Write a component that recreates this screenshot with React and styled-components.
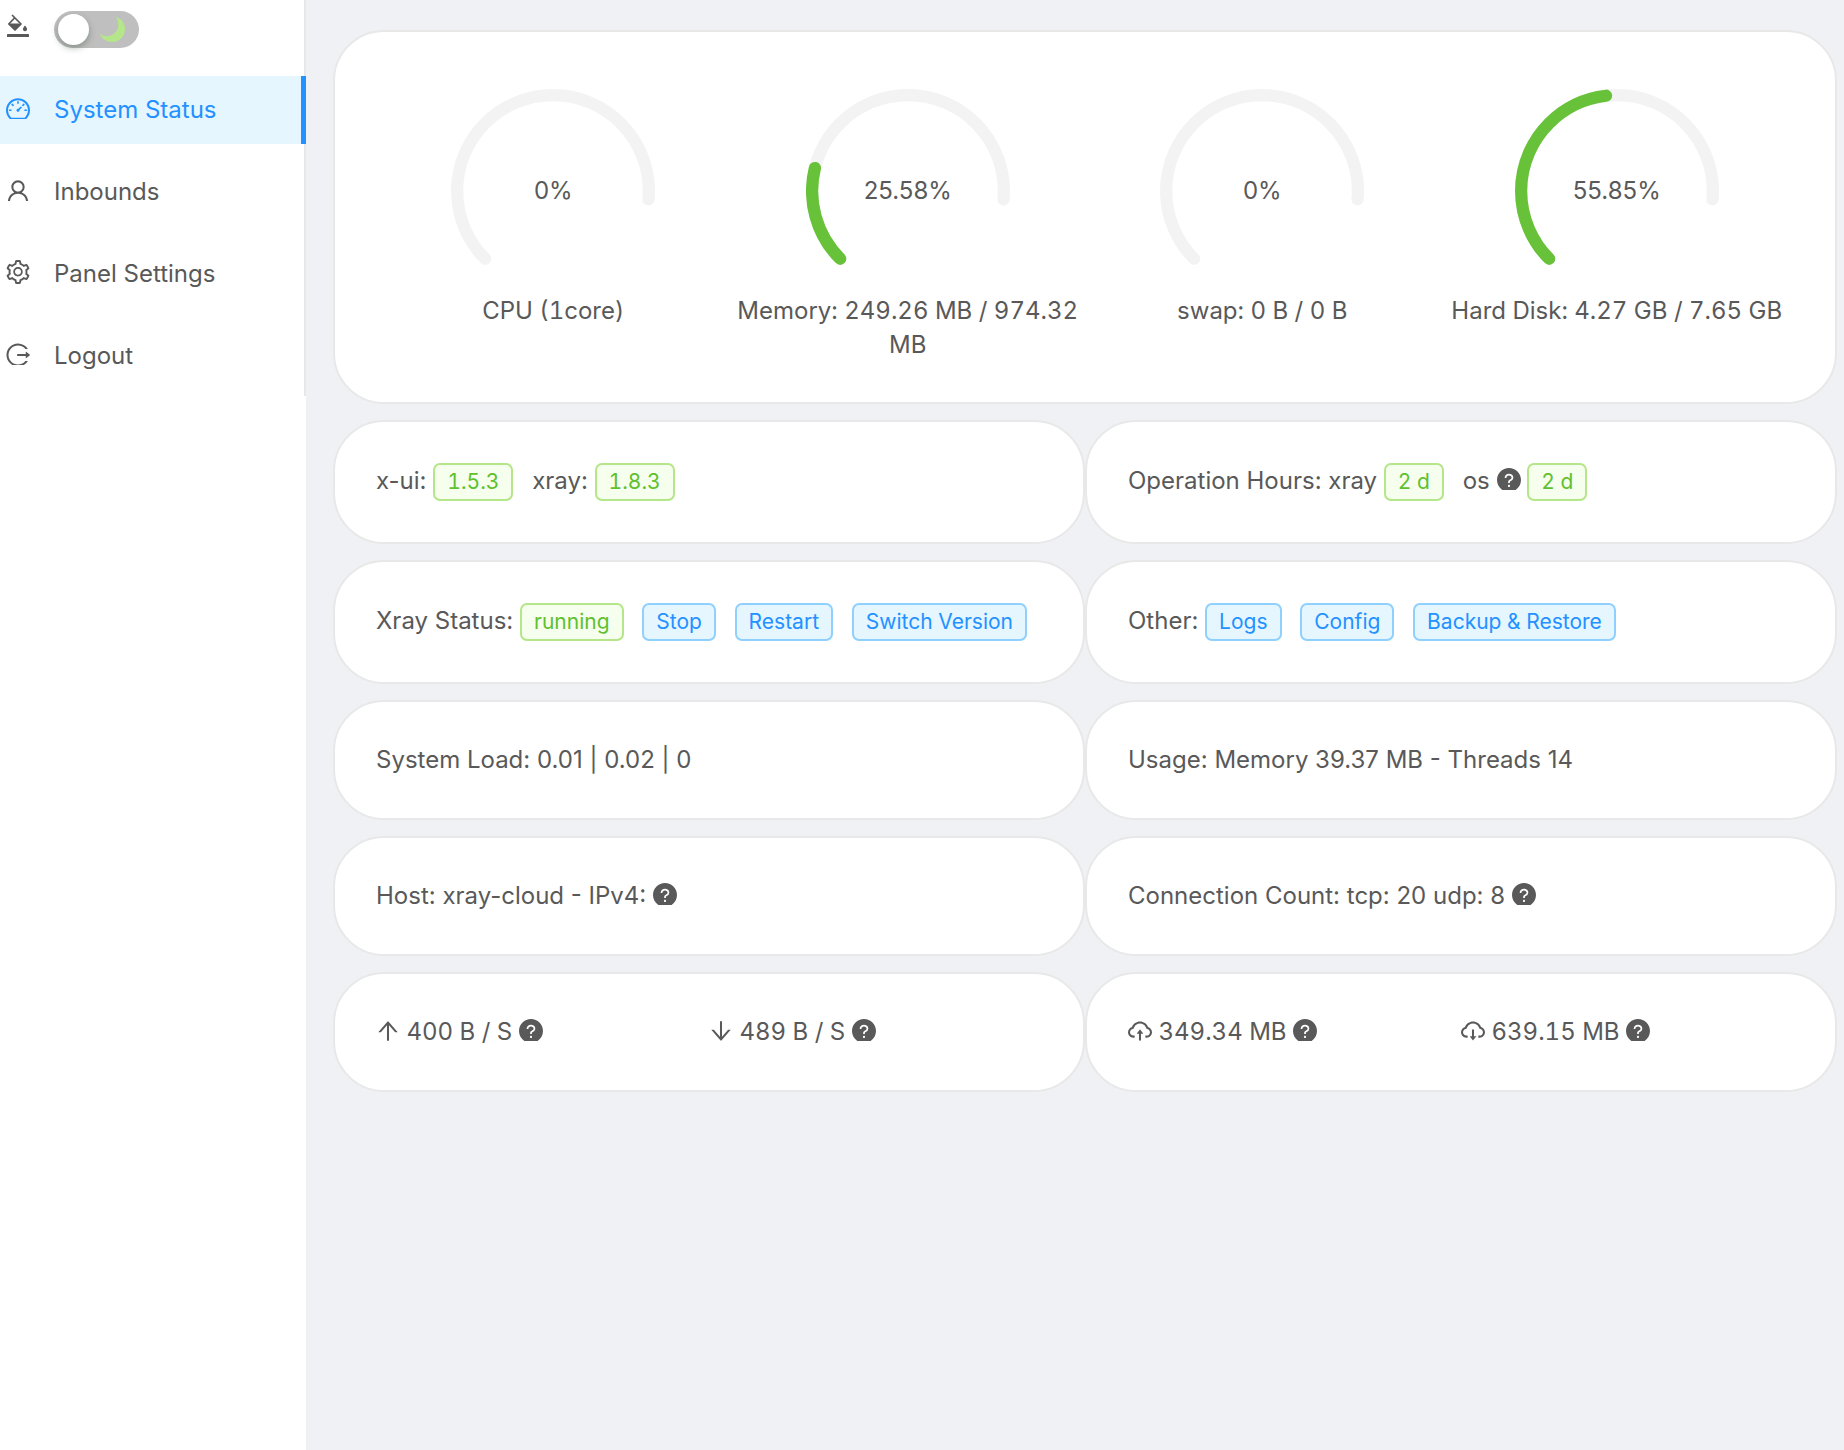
import React, { useState } from "react";
import styled, { createGlobalStyle, css } from "styled-components";
import {
  AiFillQuestionCircle,
  AiOutlineArrowDown,
  AiOutlineArrowUp,
  AiOutlineCloudDownload,
  AiOutlineCloudUpload,
  AiOutlineDashboard,
  AiOutlineLogout,
  AiOutlineSetting,
  AiOutlineUser
} from "react-icons/ai";

const GlobalStyle = createGlobalStyle`
  * {
    box-sizing: border-box;
  }

  body {
    margin: 0;
    background: #f0f1f5;
    color: #595959;
    font-family: Inter, "Liberation Sans", sans-serif;
    font-size: 24px;
    line-height: 34px;
  }
`;

const Layout = styled.div`
  display: flex;
  min-height: 100vh;
`;

const Sidebar = styled.aside`
  flex: 0 0 306px;
  background-color: #fff;
`;

const Menu = styled.ul`
  margin: 0;
  padding: 0 0 6px;
  list-style: none;
  border-right: 2px solid #e8e8e8;
`;

const ThemeRow = styled.li`
  display: flex;
  align-items: flex-start;
  gap: 24px;
  height: 62px;
  margin-bottom: 14px;
  padding: 11px 0 0 6px;
`;

const BucketIcon = styled.svg`
  width: 24px;
  height: 28px;
  fill: currentColor;
`;

const MenuItem = styled.li`
  margin-right: -2px;

  & + & {
    margin-top: 14px;
  }
`;

const MenuLink = styled.a`
  display: block;
  padding-left: 6px;
  line-height: 68px;
  color: inherit;
  text-decoration: none;

  ${props =>
    props.$active &&
    css`
      color: #2391ff;
      background-color: #e5f6ff;
      border-right: 5px solid #2391ff;
    `}
`;

const InlineIcon = styled.span`
  svg {
    width: 24px;
    height: ${props => (props.$tall ? "24px" : "22px")};
    vertical-align: ${props => (props.$tall ? "-2px" : "-1px")};
  }
`;

const MenuIcon = styled(InlineIcon)`
  display: inline-block;
  margin-right: 24px;
`;

const SwitchLabel = styled.label`
  display: grid;
  cursor: pointer;
`;

const SwitchInput = styled.input`
  grid-area: 1 / 1;
  appearance: none;
  width: 85px;
  height: 37px;
  margin: 0;
  padding: 3px 4px;
  border-radius: 20px;
  background-color: #bfbfbf;
  cursor: pointer;

  &:before {
    content: "";
    display: block;
    width: 31px;
    height: 31px;
    border-radius: 50%;
    background-color: #fff;
    box-shadow: 0 3px 7px rgba(0, 35, 11, 0.3);
  }

  &:checked {
    background-color: #2391ff;
  }

  &:checked:before {
    margin-left: auto;
  }
`;

const Moon = styled.svg`
  grid-area: 1 / 1;
  width: 28px;
  height: 28px;
  margin: 4px 0 0 45px;
  pointer-events: none;
`;

const Content = styled.main`
  flex: 1;
  min-width: 0;
  display: grid;
  grid-template-columns: 1fr 1fr;
  align-content: start;
  row-gap: 16px;
  padding: 30px 7px 28px 27px;
`;

const Card = styled.section`
  padding: 41px;
  background-color: #fff;
  border: 2px solid #e8e8e8;
  border-radius: 51px;
`;

const GaugeCard = styled(Card)`
  grid-column: 1 / -1;
  display: grid;
  grid-template-columns: repeat(4, 1fr);
  padding-top: 57px;
  padding-bottom: 40px;
`;

const GaugeItem = styled.div`
  text-align: center;
`;

const GaugeDial = styled.div`
  display: grid;
  place-items: center;
`;

const GaugeSvg = styled.svg`
  grid-area: 1 / 1;
  width: 204px;
  height: 204px;
  fill: none;
  stroke-width: 6;
  stroke-linecap: round;
`;

const GaugeValue = styled.span`
  grid-area: 1 / 1;
`;

const GaugeLabel = styled.div`
  margin-top: 1px;
  font-variant-numeric: tabular-nums;
`;

const Halves = styled(Card)`
  display: grid;
  grid-template-columns: 1fr 1fr;
  font-variant-numeric: tabular-nums;
`;

const Half = styled.div``;

const Tag = styled.span`
  display: inline-block;
  margin: 0 12px 0 0;
  padding: 0 12px;
  border: 2px solid #b5e68a;
  border-radius: 7px;
  background-color: #f6ffed;
  color: #5fc12f;
  font-family: inherit;
  font-size: 21px;
  font-variant-numeric: tabular-nums;
  line-height: 34px;

  &:last-child {
    margin-right: 0;
  }
`;

const ActionTag = styled(Tag).attrs({ as: "button", type: "button" })`
  border-color: #8fd0ff;
  background-color: #e5f6ff;
  color: #2391ff;
  cursor: pointer;
`;

const links = [
  { title: "System Status", href: "#status", icon: AiOutlineDashboard },
  { title: "Inbounds", href: "#inbounds", icon: AiOutlineUser },
  { title: "Panel Settings", href: "#settings", icon: AiOutlineSetting, tall: true },
  { title: "Logout", href: "#logout", icon: AiOutlineLogout }
];

const gauges = [
  { percent: 0, label: "CPU (1core)" },
  { percent: 25.58, label: "Memory: 249.26 MB / 974.32 MB" },
  { percent: 0, label: "swap: 0 B / 0 B" },
  { percent: 55.85, label: "Hard Disk: 4.27 GB / 7.65 GB" }
];

// degrees covered by a full gauge, starting at the lower left
const SWEEP = 230;

const Icon = ({ of: Glyph }) => (
  <Glyph viewBox="64 64 896 896" preserveAspectRatio="xMidYMin slice" aria-hidden="true" />
);

const Inline = ({ of }) => (
  <InlineIcon>
    <Icon of={of} />
  </InlineIcon>
);

const Help = () => <Inline of={AiFillQuestionCircle} />;

const Bucket = () => (
  <BucketIcon viewBox="0 0 24 28" aria-hidden="true">
    <path
      d="M6 4L9 7L15 13L9 19L2.800 13L8.500 7"
      fill="none"
      stroke="currentColor"
      strokeWidth="1.700"
      strokeLinejoin="round"
    />
    <path d="M2.500 12.600H15.400L9 19.300Z" />
    <path d="M19 14.500C20.200 16 21 17 21 18.300A2 2 0 0 1 17 18.300C17 17 17.800 16 19 14.500Z" />
    <rect x="1" y="23" width="22" height="3" rx="0.500" />
  </BucketIcon>
);

const Arc = ({ degrees, color }) => (
  <circle
    cx="50"
    cy="50"
    r="47"
    pathLength="360"
    stroke={color}
    strokeDasharray={`${degrees} 360`}
    transform="rotate(135 50 50)"
  />
);

const Gauge = ({ percent, label }) => (
  <GaugeItem>
    <GaugeDial>
      <GaugeSvg viewBox="0 0 100 100" aria-hidden="true">
        <Arc degrees={SWEEP} color="#f3f3f4" />
        {percent > 0 && <Arc degrees={(SWEEP * percent) / 100} color="#67c23a" />}
      </GaugeSvg>
      <GaugeValue>{percent}%</GaugeValue>
    </GaugeDial>
    <GaugeLabel>{label}</GaugeLabel>
  </GaugeItem>
);

const ThemeSwitch = () => {
  const [dark, setDark] = useState(false);

  return (
    <SwitchLabel>
      <SwitchInput
        type="checkbox"
        role="switch"
        aria-label="Dark theme"
        checked={dark}
        onChange={() => setDark(!dark)}
      />
      <Moon viewBox="0 0 28 28" aria-hidden="true">
        <path
          fill="#b5e68a"
          d="M17 2C22 3.500 26 8 26 14C26 21 20.500 27 13.500 27C7.500 27 3 24 0.500 18.500C4 21 8 22 12 20.500C19 18 21.500 9.500 17 2Z"
        />
      </Moon>
    </SwitchLabel>
  );
};

export default () => {
  return (
    <Layout>
      <GlobalStyle />
      <Sidebar>
        <nav>
          <Menu>
            <ThemeRow>
              <Bucket />
              <ThemeSwitch />
            </ThemeRow>
            {links.map((link, index) => (
              <MenuItem key={link.title}>
                <MenuLink href={link.href} $active={index === 0}>
                  <MenuIcon $tall={link.tall}>
                    <Icon of={link.icon} />
                  </MenuIcon>
                  {link.title}
                </MenuLink>
              </MenuItem>
            ))}
          </Menu>
        </nav>
      </Sidebar>
      <Content>
        <GaugeCard>
          {gauges.map(gauge => (
            <Gauge key={gauge.label} {...gauge} />
          ))}
        </GaugeCard>
        <Card>
          x-ui: <Tag>1.5.3</Tag> xray: <Tag>1.8.3</Tag>
        </Card>
        <Card>
          Operation Hours: xray <Tag>2 d</Tag> os <Help /> <Tag>2 d</Tag>
        </Card>
        <Card>
          Xray Status: <Tag>running</Tag> <ActionTag>Stop</ActionTag>{" "}
          <ActionTag>Restart</ActionTag> <ActionTag>Switch Version</ActionTag>
        </Card>
        <Card>
          Other: <ActionTag>Logs</ActionTag> <ActionTag>Config</ActionTag>{" "}
          <ActionTag>Backup & Restore</ActionTag>
        </Card>
        <Card>System Load: 0.01 | 0.02 | 0</Card>
        <Card>Usage: Memory 39.37 MB - Threads 14</Card>
        <Card>
          Host: xray-cloud - IPv4: <Help />
        </Card>
        <Card>
          Connection Count: tcp: 20 udp: 8 <Help />
        </Card>
        <Halves>
          <Half>
            <Inline of={AiOutlineArrowUp} /> 400 B / S <Help />
          </Half>
          <Half>
            <Inline of={AiOutlineArrowDown} /> 489 B / S <Help />
          </Half>
        </Halves>
        <Halves>
          <Half>
            <Inline of={AiOutlineCloudUpload} /> 349.34 MB <Help />
          </Half>
          <Half>
            <Inline of={AiOutlineCloudDownload} /> 639.15 MB <Help />
          </Half>
        </Halves>
      </Content>
    </Layout>
  );
};
